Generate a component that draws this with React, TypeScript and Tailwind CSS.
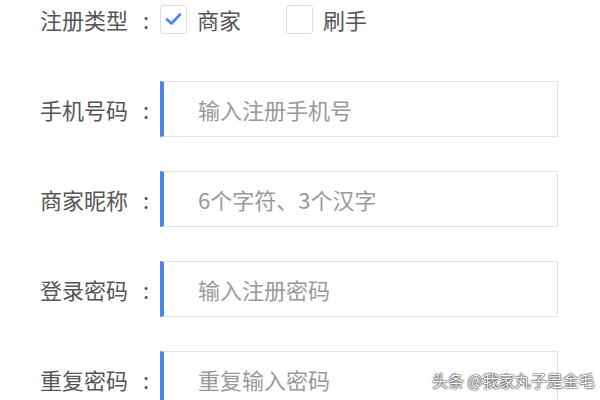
const font = "font-['Microsoft_YaHei','Noto_Sans_CJK_SC',sans-serif]";

type FieldProps = { label: string; placeholder: string };

function Field({ label, placeholder }: FieldProps) {
  return (
    <div className="flex h-[56px] items-center">
      <label className="w-[120px] shrink-0 text-[22px] text-[#555]">
        {label}
        <span className="ml-[15px]">:</span>
      </label>
      <div className="flex h-full w-[398px] items-center border border-[#e3e3e3] border-l-[4px] border-l-[#4a86e8] pl-[34px]">
        <span className="text-[22px] text-[#999]">{placeholder}</span>
      </div>
    </div>
  );
}

function Check({ checked }: { checked?: boolean }) {
  return (
    <span className="flex h-[29px] w-[27px] items-center justify-center rounded-[3px] border border-[#ddd] bg-white">
      {checked && (
        <svg width="17" height="14" viewBox="0 0 17 14" fill="none">
          <path d="M2 7.5 L6.5 11.5 L15 2.5" stroke="#4a86e8" strokeWidth="2.6" strokeLinecap="round" strokeLinejoin="round" />
        </svg>
      )}
    </span>
  );
}

export default function App() {
  return (
    <div className={`relative h-[400px] w-[600px] overflow-hidden bg-white pl-[40px] pt-[4px] ${font}`}>
      <div className="flex h-[30px] items-center">
        <span className="w-[120px] shrink-0 text-[22px] text-[#555]">
          注册类型<span className="ml-[15px]">:</span>
        </span>
        <Check checked />
        <span className="ml-[10px] text-[22px] text-[#555]">商家</span>
        <span className="ml-[45px]">
          <Check />
        </span>
        <span className="ml-[10px] text-[22px] text-[#555]">刷手</span>
      </div>

      <div className="mt-[47px] flex flex-col gap-[34px]">
        <Field label="手机号码" placeholder="输入注册手机号" />
        <Field label="商家昵称" placeholder="6个字符、3个汉字" />
        <Field label="登录密码" placeholder="输入注册密码" />
        <Field label="重复密码" placeholder="重复输入密码" />
      </div>

      <span className="absolute left-[432px] top-[368px] text-[16px] text-white [text-shadow:0_0_2px_#000,0_0_1px_#000]">
        头条 @我家丸子是金毛
      </span>
    </div>
  );
}
